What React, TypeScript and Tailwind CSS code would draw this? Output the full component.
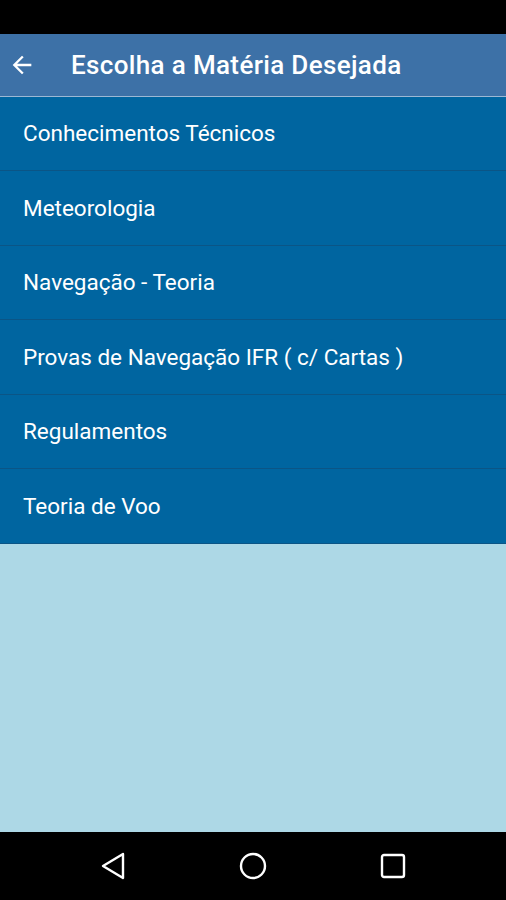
import React from "react";

const items = [
  { label: "Conhecimentos Técnicos", h: "h-[74px]" },
  { label: "Meteorologia", h: "h-[75px]" },
  { label: "Navegação - Teoria", h: "h-[74px]" },
  { label: "Provas de Navegação IFR ( c/ Cartas )", h: "h-[75px]" },
  { label: "Regulamentos", h: "h-[74px]" },
  { label: "Teoria de Voo", h: "h-[75px]" },
];

export default function App() {
  return (
    <div
      className="w-[506px] h-[900px] flex flex-col bg-[#add8e6] overflow-hidden"
      style={{ fontFamily: "Roboto, 'Noto Sans', sans-serif" }}
    >
      <div className="h-[34px] bg-black shrink-0" />
      <div className="h-[62px] bg-[#3d71a7] flex items-center shrink-0">
        <svg width="28" height="28" viewBox="0 0 24 24" className="ml-[8px]">
          <path
            d="M20 11H7.83l5.59-5.59L12 4l-8 8 8 8 1.41-1.41L7.83 13H20v-2z"
            fill="#ffffff"
          />
        </svg>
        <span className="ml-[35px] text-white text-[26px] font-medium tracking-[0.35px]">
          Escolha a Matéria Desejada
        </span>
      </div>
      <div className="h-[1px] bg-[#9db8d4] shrink-0" />
      <div className="flex flex-col shrink-0">
        {items.map((it) => (
          <div
            key={it.label}
            className={`${it.h} bg-[#0065a0] border-b border-[#0b5586] flex items-center pl-[23px] pt-[1px]`}
          >
            <span className="text-white text-[22.5px]">{it.label}</span>
          </div>
        ))}
      </div>
      <div className="flex-1" />
      <div className="h-[68px] bg-black shrink-0 flex items-center justify-center gap-[112px] pr-[1px]">
        <svg width="26" height="28" viewBox="0 0 26 28">
          <path
            d="M23 2 L3 14 L23 26 Z"
            fill="none"
            stroke="#ffffff"
            strokeWidth="2.4"
            strokeLinejoin="round"
          />
        </svg>
        <svg width="30" height="30" viewBox="0 0 30 30">
          <circle cx="15" cy="15" r="12" fill="none" stroke="#ffffff" strokeWidth="2.4" />
        </svg>
        <svg width="26" height="26" viewBox="0 0 26 26">
          <rect x="2" y="2" width="22" height="22" rx="2" fill="none" stroke="#ffffff" strokeWidth="2.4" />
        </svg>
      </div>
    </div>
  );
}
